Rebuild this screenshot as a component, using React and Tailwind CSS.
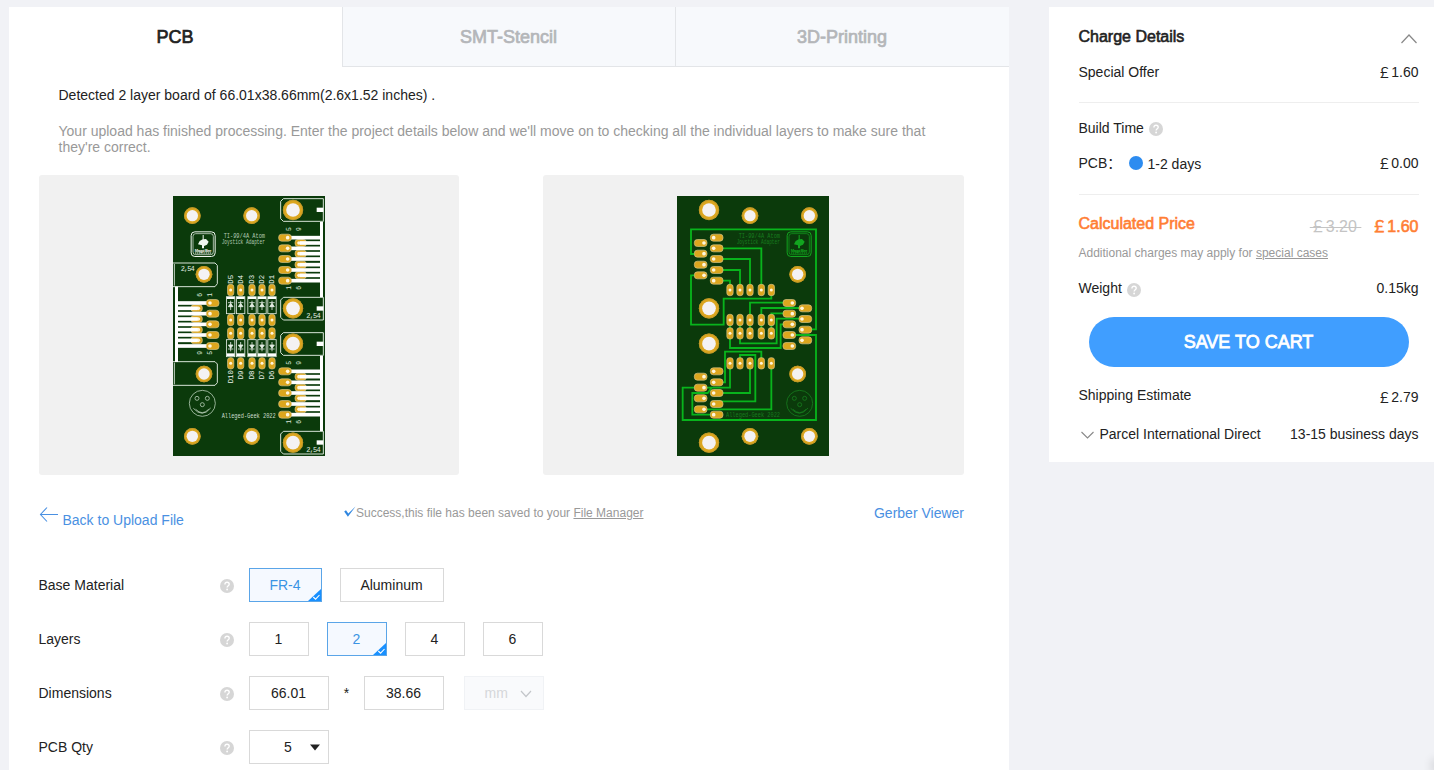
import React from "react";

const GOLD = "#dca61e";
const GOLD_EDGE = "#b9952b";
const BOARD = "#0b3a0b";
const TRACE = "#08b41c";
const HOLE = "#f4f2f3";

function Hole({ x, y, big }) {
  return (
    <g>
      <circle cx={x} cy={y} r={big ? 30.5 : 25} fill={GOLD} />
      <circle cx={x} cy={y} r={big ? 29 : 23.5} fill="none" stroke={GOLD_EDGE} strokeWidth="2.5" />
      <circle cx={x} cy={y} r={big ? 20.5 : 17} fill={HOLE} />
    </g>
  );
}

function HPad({ x, y, dot = 8, w = 38 }) {
  return (
    <g>
      <rect x={x - w / 2} y={y - 10.5} width={w} height="21" rx="9" fill={GOLD} stroke="#d6c48a" strokeWidth="2" />
      <circle cx={x + dot} cy={y} r="5.5" fill="#fff6dd" />
    </g>
  );
}

function VPad({ x, y }) {
  return (
    <g>
      <rect x={x - 9.5} y={y - 17} width="19" height="34" rx="8" fill={GOLD} stroke="#d6c48a" strokeWidth="2" />
      <circle cx={x} cy={y} r="4.5" fill="#fff6dd" />
    </g>
  );
}

const DIODES = [197, 227, 261, 291, 321];
const UPPER = [143, 159, 175, 191, 207, 224, 240, 256, 272];
const LOWER = [544, 560, 577, 593, 609, 625, 642, 658, 674];
const LEFT = [339, 355, 371, 387, 403, 419, 435, 451, 468];

function RightConnector({ ys, top, bottom }) {
  return (
    <g>
      {ys.map((y, i) => i % 2 === 1 && <HPad key={y} x={407} y={y} dot={-5} w={34} />)}
      {ys.map((y, i) => (
        <rect key={y} x={i % 2 ? 405 : 375} y={y - 5.5} width={i % 2 ? 62 : 92} height="11" fill="#fff" />
      ))}
      {ys.map((y, i) => i % 2 === 0 && <HPad key={y} x={360} y={y} />)}
      <rect x="465" y={top} width="9" height={bottom - top} fill="#fff" />
    </g>
  );
}

function Mount({ y }) {
  return (
    <g>
      <path
        d={`M475 ${y}H355L347 ${y + 8}V${y + 60}L355 ${y + 68}H475Z`}
        fill="none"
        stroke="#d8e4d8"
        strokeWidth="3"
      />
      <rect x="455" y={y + 27} width="20" height="13" fill="#fff" />
    </g>
  );
}

function Badge({ x, y, color }) {
  return (
    <g transform={`translate(${x} ${y})`}>
      <rect x="1.5" y="1.5" width="72" height="74" rx="11" fill="none" stroke={color} strokeWidth="3" />
      <rect x="7" y="7" width="61" height="63" rx="8" fill="none" stroke={color} strokeWidth="2" />
      <path d="M36 11v13l-9 5-5 10 12 3v9h6v-7l9-4 5-9-8-8-7 1V11z" fill={color} />
      <text x="37.5" y="61" textAnchor="middle" fontSize="12" fontWeight="bold" textLength="50" fontFamily="Liberation Sans" fill={color}>Magpi Bee</text>
      <path d="M13 65h50" stroke={color} strokeWidth="3" strokeDasharray="4 1.5" />
    </g>
  );
}

function Smiley({ x, y, color }) {
  return (
    <g fill="none" stroke={color} strokeWidth="2.4">
      <circle cx={x} cy={y} r="39" />
      <circle cx={x - 16} cy={y - 15} r="6" />
      <circle cx={x + 15} cy={y - 15} r="6" />
      <circle cx={x} cy={y + 4} r="6" />
      <path d={`M${x - 27} ${y + 15}Q${x} ${y + 45} ${x + 25} ${y + 14}`} />
      <path d={`M${x - 20} ${y + 18}Q${x} ${y + 38} ${x + 19} ${y + 18}`} />
    </g>
  );
}

function TopBoard() {
  return (
    <svg className="block h-[260px] w-[152px]" viewBox="24 18 456 780" fontFamily="Liberation Mono, monospace">
      <rect x="24" y="18" width="456" height="780" fill={BOARD} />
      <path d="M24 219H150L157 226V281L150 290H24M24 515H150L157 522V578L150 586H24" fill="none" stroke="#d8e4d8" strokeWidth="3" />
      <path d="M28 222V287M28 518V583" stroke="#c9d8c9" strokeWidth="3" />
      <Mount y={26} />
      <Mount y={322} />
      <Mount y={428} />
      <Mount y={724} />
      <RightConnector ys={UPPER} top={96} bottom={321} />
      <RightConnector ys={LOWER} top={498} bottom={723} />
      {LEFT.map((y, i) => i % 2 === 1 && <HPad key={y} x={95} y={y} dot={5} w={34} />)}
      {LEFT.map((y, i) => (
        <rect key={y} x="36" y={y - 5.5} width={i % 2 ? 62 : 92} height="11" fill="#fff" />
      ))}
      {LEFT.map((y, i) => i % 2 === 0 && <HPad key={y} x={143} y={y} dot={-8} />)}
      <rect x="30" y="290" width="9" height="226" fill="#fff" />
      {[[82, 77], [260, 77], [117, 253], [117, 552], [82, 739], [260, 739]].map(([x, y]) => (
        <Hole key={`${x}-${y}`} x={x} y={y} />
      ))}
      {[60, 355, 461, 758].map((y) => <Hole key={y} x={384} y={y} big />)}
      {DIODES.map((x, i) => (
        <g key={x}>
          {[300, 390, 430, 520].map((y) => <VPad key={y} x={x} y={y} />)}
          <g fill="none" stroke="#e2ece2" strokeWidth="2.5">
            <rect x={x - 12.5} y="320" width="25" height="51" />
            <rect x={x - 12.5} y="449" width="25" height="51" />
            <path fill="#e2ece2" d={`M${x} 332V360M${x - 8} 338H${x + 8}M${x - 7} 350L${x} 340L${x + 7} 350Z`} />
            <path fill="#e2ece2" d={`M${x} 456V484M${x - 8} 477H${x + 8}M${x - 7} 465L${x} 475L${x + 7} 465Z`} />
          </g>
          <path d={`M${x - 12} 324H${x + 12}`} stroke="#fff" strokeWidth="6" />
          <path d={`M${x - 12} 494H${x + 12}`} stroke="#fff" strokeWidth="8" />
          <text transform={`translate(${x + 7} 281) rotate(-90)`} fontSize="22" fill="#eef5ee">{`D${5 - i}`}</text>
          <text transform={`translate(${x + 7} ${i ? 568 : 580}) rotate(-90)`} fontSize="22" fill="#eef5ee">{`D${10 - i}`}</text>
        </g>
      ))}
      <Badge x={77} y={124} color="#f0f6f0" />
      <g fill="#b4cbb4" fontSize="20">
        <text x="176" y="143" textLength="124" lengthAdjust="spacingAndGlyphs">TI-99/4A Atom</text>
        <text x="170" y="163" textLength="130" lengthAdjust="spacingAndGlyphs">Joystick Adapter</text>
        <text x="170" y="683" textLength="162" lengthAdjust="spacingAndGlyphs" fill="#d0dfd0">Alleged-Geek 2022</text>
      </g>
      <g fill="#e4eee4" fontSize="21">
        <text x="47" y="242" textLength="42">2,54</text>
        <text x="424" y="384" textLength="43">2,54</text>
        <text x="424" y="785" textLength="43">2,54</text>
      </g>
      <g fill="#dbe6db" fontSize="19">
        {[[378, 118, "5"], [407, 118, "9"], [378, 294, "1"], [407, 294, "6"], [378, 519, "5"], [407, 519, "9"], [378, 696, "1"], [407, 696, "6"], [112, 315, "6"], [140, 315, "1"], [112, 489, "9"], [140, 489, "5"]].map(([x, y, t]) => (
          <text key={`${x}-${y}`} transform={`translate(${x} ${y + 5}) rotate(-90)`}>{t}</text>
        ))}
      </g>
      <Smiley x={112} y={640} color="#b9cfb9" />
    </svg>
  );
}

function BottomBoard() {
  const cols = [180, 210, 240, 274, 304];
  return (
    <svg className="block h-[260px] w-[152px]" viewBox="21 18 456 780" fontFamily="Liberation Mono, monospace">
      <rect x="21" y="18" width="456" height="780" fill={BOARD} />
      <g fill="none" stroke={TRACE} strokeWidth="5.5">
        <path d="M92 192H63V118H438V418H406" />
        <path d="M92 256H63V404H161V326H304V300" />
        <path d="M140 175H274V300M140 207H240V300M140 240H210V300M140 272H180V300" />
        <path d="M240 390V338H358M274 390V354H406M304 390V370H358M406 386H320V460H210V390M358 403H332V474H180V390" />
        <path d="M240 390V430M274 390V430M304 390V430" />
        <path d="M358 435H438V690H38V593H92" />
        <path d="M140 577H165V485H274V520M210 520V495H256V634H140" />
        <path d="M180 520V593H125L113 609H67V674H140M92 593H125M140 609H240V520M92 658H304V520" />
      </g>
      {[[240, 77], [418, 77], [383, 253], [383, 552], [240, 739], [418, 739]].map(([x, y]) => (
        <Hole key={`${x}-${y}`} x={x} y={y} />
      ))}
      {[60, 355, 461, 758].map((y) => <Hole key={y} x={117} y={y} big />)}
      {UPPER.map((y, i) => <HPad key={y} x={i % 2 ? 92 : 140} y={y} dot={i % 2 ? 10 : -9} />)}
      {LOWER.map((y, i) => <HPad key={y} x={i % 2 ? 92 : 140} y={y} dot={i % 2 ? 10 : -9} />)}
      {LEFT.map((y, i) => <HPad key={y} x={i % 2 ? 406 : 358} y={y} dot={i % 2 ? -10 : 9} />)}
      {cols.map((x) => [300, 390, 430, 520].map((y) => <VPad key={`${x}-${y}`} x={x} y={y} />))}
      <Badge x={350} y={124} color="#12a51f" />
      <g fill="#177d1e" fontSize="20">
        <text x="206" y="143" textLength="124" lengthAdjust="spacingAndGlyphs">TI-99/4A Atom</text>
        <text x="200" y="163" textLength="130" lengthAdjust="spacingAndGlyphs">Joystick Adapter</text>
        <text x="168" y="682" textLength="162" lengthAdjust="spacingAndGlyphs">Alleged-Geek 2022</text>
      </g>
      <Smiley x={389} y={640} color="#177d1e" />
    </svg>
  );
}

function Help({ className = "" }) {
  return (
    <svg className={`block size-[14px] shrink-0 ${className}`} viewBox="0 0 14 14" fill="none">
      <circle cx="7" cy="7" r="7" fill="#d6d6d6" />
      <path d="M4.9 5.4C4.9 4.1 5.8 3.3 7 3.3S9.2 4 9.2 5.2C9.2 6.7 7.1 6.7 7.1 8.5" stroke="#fff" strokeWidth="1.4" />
      <circle cx="7.1" cy="10.5" r=".9" fill="#fff" />
    </svg>
  );
}

function Option({ children, selected, className }) {
  return (
    <button
      className={`relative flex h-[34px] items-center justify-center border pr-px ${
        selected ? "border-[#5aa5e8] bg-[#f5f9ff] text-[#3a94e4]" : "border-[#d9d9d9] bg-white"
      } ${className}`}
    >
      {children}
      {selected && (
        <svg className="absolute right-0 bottom-0 h-3 w-[13px]" viewBox="0 0 13 12">
          <path d="M13 0V12H0Z" fill="#1890ff" />
          <path d="M5.300 8L7.600 10.200L11.500 6" fill="none" stroke="#fff" strokeWidth="1.1" />
        </svg>
      )}
    </button>
  );
}

function Row({ label, children }) {
  return (
    <div className="-ml-[0.5px] flex h-[34px] items-center">
      <span className="w-[181.5px]">{label}</span>
      <Help className="mr-[15px] mt-[2px]" />
      {children}
    </div>
  );
}

function Tab({ children, active, className }) {
  return (
    <div
      className={`flex items-center justify-center pr-px text-lg [-webkit-text-stroke:0.7px] ${
        active ? "bg-white text-[#222]" : "border-b border-l border-[#e3e5e8] bg-[#f7f9fc] text-[#b4b6b9]"
      } ${className}`}
    >
      {children}
    </div>
  );
}

export default function App() {
  return (
    <div className="relative flex h-[770px] w-[1434px] items-start overflow-hidden bg-[#f1f2f6] pt-[7px] pl-[9px] font-['Liberation_Sans','Noto_Sans_CJK_SC',sans-serif] text-sm text-[#222]">
      <main className="h-[763px] w-[1000px] shrink-0 bg-white">
        <nav className="flex h-[60px]">
          <Tab active className="w-[333px]">PCB</Tab>
          <Tab className="w-[333px]">SMT-Stencil</Tab>
          <Tab className="w-[334px]">3D-Printing</Tab>
        </nav>
        <div className="px-[30px]">
          <p className="pt-5 pl-[19.5px] leading-4">Detected 2 layer board of 66.01x38.66mm(2.6x1.52 inches) .</p>
          <p className="mt-5 w-[900px] pl-[19.5px] leading-4 text-[#999]">
            Your upload has finished processing. Enter the project details below and we'll move on to checking all the individual layers to make sure that they're correct.
          </p>
          <div className="mt-5 flex w-[925px] justify-between">
            <div className="flex h-[300px] w-[420px] justify-center rounded-[3px] bg-[#f1f1f1] pt-[21px]"><TopBoard /></div>
            <div className="flex h-[300px] w-[421px] justify-center rounded-[3px] bg-[#f1f1f1] pt-[21px] pr-px"><BottomBoard /></div>
          </div>
          <div className="mt-[30px] flex h-[63px] w-[925px] items-start justify-between">
            <a className="flex w-[305px] text-[#4a90e2]">
              <svg className="mt-[1px] h-[17px] w-[23px]" viewBox="0 0 23 17" fill="none" stroke="#4a90e2" strokeWidth="1.1">
                <path d="M19 8.500H1.500M8 1.500L1.500 8.500L8 15.500" />
              </svg>
              <span className="ml-[0.5px] mt-[7px] leading-4">Back to Upload File</span>
            </a>
            <span className="flex flex-1 text-xs leading-4 text-[#999]">
              <svg className="mt-px h-3 w-3" viewBox="0 0 12 12"><path d="M.2 5.400L3.900 10.800L11.500.6L4.300 7.400L2 4.200Z" fill="#2f86e0" /></svg>
              <span>Success,this file has been saved to your <a className="underline">File Manager</a></span>
            </span>
            <a className="leading-4 text-[#4a90e2]">Gerber Viewer</a>
          </div>
          <div className="flex flex-col gap-5">
            <Row label="Base Material">
              <Option selected className="w-[73px]">FR-4</Option>
              <Option className="ml-[18px] w-[104px]">Aluminum</Option>
            </Row>
            <Row label="Layers">
              <div className="flex gap-[18px]">
                <Option className="w-[60px]">1</Option>
                <Option selected className="w-[60px]">2</Option>
                <Option className="w-[60px]">4</Option>
                <Option className="w-[60px]">6</Option>
              </div>
            </Row>
            <Row label="Dimensions">
              <Option className="w-20">66.01</Option>
              <span className="w-[35px] text-center">*</span>
              <Option className="w-20">38.66</Option>
              <div className="ml-5 flex h-[34px] w-20 items-center border border-[#f0f2f5] bg-[#f9fafc] pl-[19.5px] text-[#d5d7da]">
                mm
                <svg className="ml-[12.5px] mt-[2px] h-2 w-3" viewBox="0 0 12 8" fill="none" stroke="#c3c6ca" strokeWidth="1.2"><path d="M1 1L6 6.500L11 1" /></svg>
              </div>
            </Row>
            <Row label="PCB Qty">
              <div className="flex h-[34px] w-20 items-center border border-[#d9d9d9] pl-[34px]">
                5
                <svg className="ml-[18px] mt-px h-[7px] w-[10px]" viewBox="0 0 10 7"><path d="M0 .5H10L5 6.500Z" fill="#222" /></svg>
              </div>
            </Row>
          </div>
        </div>
      </main>

      <aside className="ml-10 h-[455px] w-[400px] shrink-0 bg-white pt-[21px] pl-[29.5px] leading-4">
        <div className="w-[340px]">
          <div className="flex h-[18px] items-center justify-between text-base leading-[18px]">
            <h2 className="[-webkit-text-stroke:0.6px]">Charge Details</h2>
            <svg className="mt-[3px] mr-[1.5px] h-[10px] w-4" viewBox="0 0 16 10" fill="none" stroke="#888" strokeWidth="1.2"><path d="M.5 9L8 1L15.500 9" /></svg>
          </div>
          <div className="mt-[18px] flex justify-between"><span>Special Offer</span><span>￡1.60</span></div>
          <div className="mt-[22px] ml-[0.5px] h-px w-full bg-[#eee]" />
          <div className="mt-[17px] flex items-center">Build Time<Help className="ml-[5px] mt-[2px]" /></div>
          <div className="mt-[19px] flex h-4 items-center">
            <span className="w-[50.5px]">PCB：</span>
            <span className="size-[14px] rounded-full bg-[#2d8cf0]" />
            <span className="ml-[4.5px] mt-px flex-1">1-2 days</span>
            <span>￡0.00</span>
          </div>
          <div className="mt-[23px] ml-[0.5px] h-px w-full bg-[#eee]" />
          <div className="mt-5 flex items-start justify-between text-base leading-[18px]">
            <span className="text-[#ff7e34] [-webkit-text-stroke:0.6px]">Calculated Price</span>
            <span className="mt-[3px] flex gap-[10px]">
              <s className="text-[#c4c4c4]">￡3.20&nbsp;</s>
              <span className="text-[#ff7e34] [-webkit-text-stroke:0.6px]">￡1.60</span>
            </span>
          </div>
          <p className="mt-[9px] text-xs leading-4 text-[#999]">Additional charges may apply for <a className="underline">special cases</a></p>
          <div className="mt-[19px] flex h-4 justify-between">
            <span className="flex h-4 items-center">Weight<Help className="ml-[5px] mt-[4px]" /></span>
            <span>0.15kg</span>
          </div>
          <button className="mt-[21px] ml-[10.5px] flex h-[50px] w-[320px] items-center justify-center rounded-full bg-[#409eff] pr-px text-lg text-white [-webkit-text-stroke:0.8px]">SAVE TO CART</button>
          <div className="mt-5 flex justify-between"><span>Shipping Estimate</span><span className="mt-[2px]">￡2.79</span></div>
          <div className="mt-[21px] flex items-center">
            <svg className="ml-[2px] mr-[6px] mt-px h-2 w-[13px]" viewBox="0 0 13 8" fill="none" stroke="#888" strokeWidth="1.1"><path d="M.5 1L6.500 7L12.500 1" /></svg>
            <span className="flex-1">Parcel International Direct</span>
            <span>13-15 business days</span>
          </div>
        </div>
      </aside>
      <div className="absolute -right-1 bottom-0 h-2 w-1 shadow-[0_0_8px_3px_rgba(0,0,0,0.1)]" />
    </div>
  );
}
